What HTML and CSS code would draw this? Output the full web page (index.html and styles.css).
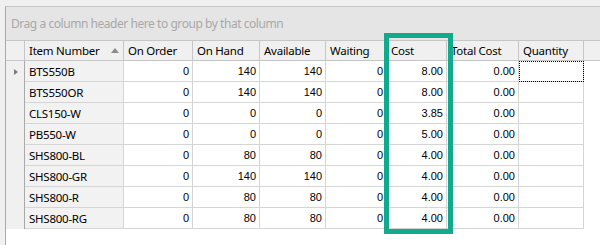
FILE: index.html
```html
<!DOCTYPE html>
<html lang="en">
<head>
  <meta charset="UTF-8">
  <title>Inventory Grid</title>
  <link rel="stylesheet" href="styles.css">
</head>
<body>
  <div class="window">
    <div class="grid-control">
      <div class="group-panel">Drag a column header here to group by that column</div>

      <div class="grid">
        <div class="row header">
          <div class="cell indicator"></div>
          <div class="cell item">Item Number <span class="sort-up"></span></div>
          <div class="cell c-order">On Order</div>
          <div class="cell c-hand">On Hand</div>
          <div class="cell c-avail">Available</div>
          <div class="cell c-wait">Waiting</div>
          <div class="cell c-cost">Cost</div>
          <div class="cell c-total">Total Cost</div>
          <div class="cell c-qty">Quantity</div>
        </div>

        <div class="row">
          <div class="cell indicator"><span class="current"></span></div>
          <div class="cell item">BTS550B</div>
          <div class="cell num c-order">0</div>
          <div class="cell num c-hand">140</div>
          <div class="cell num c-avail">140</div>
          <div class="cell num c-wait">0</div>
          <div class="cell num c-cost">8.00</div>
          <div class="cell num c-total">0.00</div>
          <div class="cell c-qty focused"></div>
        </div>
        <div class="row">
          <div class="cell indicator"></div>
          <div class="cell item">BTS550OR</div>
          <div class="cell num c-order">0</div>
          <div class="cell num c-hand">140</div>
          <div class="cell num c-avail">140</div>
          <div class="cell num c-wait">0</div>
          <div class="cell num c-cost">8.00</div>
          <div class="cell num c-total">0.00</div>
          <div class="cell c-qty"></div>
        </div>
        <div class="row">
          <div class="cell indicator"></div>
          <div class="cell item">CLS150-W</div>
          <div class="cell num c-order">0</div>
          <div class="cell num c-hand">0</div>
          <div class="cell num c-avail">0</div>
          <div class="cell num c-wait">0</div>
          <div class="cell num c-cost">3.85</div>
          <div class="cell num c-total">0.00</div>
          <div class="cell c-qty"></div>
        </div>
        <div class="row">
          <div class="cell indicator"></div>
          <div class="cell item">PB550-W</div>
          <div class="cell num c-order">0</div>
          <div class="cell num c-hand">0</div>
          <div class="cell num c-avail">0</div>
          <div class="cell num c-wait">0</div>
          <div class="cell num c-cost">5.00</div>
          <div class="cell num c-total">0.00</div>
          <div class="cell c-qty"></div>
        </div>
        <div class="row">
          <div class="cell indicator"></div>
          <div class="cell item">SHS800-BL</div>
          <div class="cell num c-order">0</div>
          <div class="cell num c-hand">80</div>
          <div class="cell num c-avail">80</div>
          <div class="cell num c-wait">0</div>
          <div class="cell num c-cost">4.00</div>
          <div class="cell num c-total">0.00</div>
          <div class="cell c-qty"></div>
        </div>
        <div class="row">
          <div class="cell indicator"></div>
          <div class="cell item">SHS800-GR</div>
          <div class="cell num c-order">0</div>
          <div class="cell num c-hand">140</div>
          <div class="cell num c-avail">140</div>
          <div class="cell num c-wait">0</div>
          <div class="cell num c-cost">4.00</div>
          <div class="cell num c-total">0.00</div>
          <div class="cell c-qty"></div>
        </div>
        <div class="row">
          <div class="cell indicator"></div>
          <div class="cell item">SHS800-R</div>
          <div class="cell num c-order">0</div>
          <div class="cell num c-hand">80</div>
          <div class="cell num c-avail">80</div>
          <div class="cell num c-wait">0</div>
          <div class="cell num c-cost">4.00</div>
          <div class="cell num c-total">0.00</div>
          <div class="cell c-qty"></div>
        </div>
        <div class="row">
          <div class="cell indicator"></div>
          <div class="cell item">SHS800-RG</div>
          <div class="cell num c-order">0</div>
          <div class="cell num c-hand">80</div>
          <div class="cell num c-avail">80</div>
          <div class="cell num c-wait">0</div>
          <div class="cell num c-cost">4.00</div>
          <div class="cell num c-total">0.00</div>
          <div class="cell c-qty"></div>
        </div>
      </div>

      <!-- highlight drawn over the Cost column -->
      <div class="cost-highlight"></div>
    </div>
  </div>
</body>
</html>
```

FILE: styles.css
```css
:root {
  --window-bg: #f0f0f0;
  --panel-bg: #e5e5e5;
  --header-bg: #f0f0f0;
  --fixed-bg: #f2f2f2;
  --frame: #a9a9a9;
  --line: #d5d5d5;
  --header-line: #c6c6c6;
  --text: #000000;
  --muted: #a8a8a8;
  --accent: #12aa8a;
}

* {
  margin: 0;
  padding: 0;
  box-sizing: border-box;
}

body {
  background: var(--window-bg);
  font-family: 'Noto Sans', 'Open Sans', sans-serif;
  font-size: 11.5px;
  color: var(--text);
}

.window {
  height: 245px;
  padding: 6px 0 0 5px;
}

.grid-control {
  position: relative;
  height: 100%;
  background: #ffffff;
  border-top: 1px solid var(--header-line);
  border-left: 1px solid var(--frame);
}

.group-panel {
  height: 34px;
  padding: 0 0 0 5px;
  display: flex;
  align-items: center;
  background: var(--panel-bg);
  border-bottom: 1px solid var(--header-line);
  color: var(--muted);
  font-size: 12px;
  letter-spacing: -0.45px;
}

.row {
  display: flex;
  height: 21px;
}

.cell {
  height: 100%;
  display: flex;
  align-items: center;
  padding: 0 4px;
  border-right: 1px solid var(--line);
  border-bottom: 1px solid var(--line);
  white-space: nowrap;
  overflow: hidden;
  letter-spacing: -0.25px;
}

.indicator {
  width: 19px;
  background: var(--header-bg);
  border-right-color: var(--frame);
  border-bottom: none;
  padding: 0 0 0 8px;
}

.item { width: 99px; background: var(--fixed-bg); }
.c-order { width: 69px; }
.c-hand { width: 67px; }
.c-avail { width: 66px; }
.c-wait { width: 61px; }
.c-cost { width: 60px; }
.c-total { width: 72px; }
.c-qty { width: 65px; }

.num {
  justify-content: flex-end;
  padding-right: 3px;
  font-family: 'Liberation Sans', Arial, sans-serif;
  font-size: 11px;
  letter-spacing: 0;
}

.header {
  height: 20px;
  background: var(--header-bg);
  border-bottom: 1px solid var(--header-line);
}

.header .cell {
  border-bottom: none;
  border-right-color: var(--header-line);
  padding-left: 4px;
}

.header .indicator {
  border-right-color: var(--header-line);
}

.header .item {
  background: none;
  justify-content: space-between;
  padding-right: 4px;
}

.sort-up {
  width: 0;
  height: 0;
  border-left: 4px solid transparent;
  border-right: 4px solid transparent;
  border-bottom: 5px solid #8c8c8c;
}

.current {
  width: 0;
  height: 0;
  border-top: 3px solid transparent;
  border-bottom: 3px solid transparent;
  border-left: 4px solid #7a7a7a;
}

.focused {
  outline: 1px dotted #000000;
  outline-offset: -1px;
}

.cost-highlight {
  position: absolute;
  left: 378px;
  top: 26px;
  width: 69px;
  height: 201px;
  border: 5px solid var(--accent);
  pointer-events: none;
}
```
